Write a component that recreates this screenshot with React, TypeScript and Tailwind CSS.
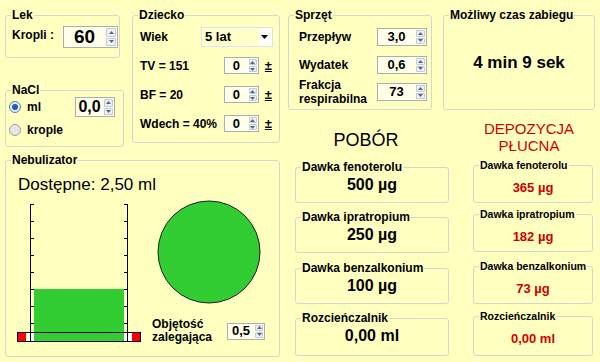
import React from "react";

type GroupProps = {
  label: string;
  className?: string;
  legend?: string;
  children?: React.ReactNode;
};

// WinForms-like group box
const Group = ({ label, className = "", legend = "text-[12px] leading-[14px]", children }: GroupProps) => (
  <fieldset className={"border border-[#d4d6d2] rounded-[3px] min-w-0 shrink-0 " + className}>
    <legend className={"ml-[5px] px-[1px] font-bold whitespace-nowrap " + legend}>{label}</legend>
    {children}
  </fieldset>
);

const Arrow = ({ down }: { down?: boolean }) => (
  <svg width="5" height="3" viewBox="0 0 5 3">
    <path d={down ? "M0 0 L2.5 3 L5 0Z" : "M0 3 L2.5 0 L5 3Z"} fill="#52658a" />
  </svg>
);

type SpinProps = { value: string; box: string; text: string; btn?: string };

const Spin = ({ value, box, text, btn = "w-[11px]" }: SpinProps) => (
  <div className={"flex border border-[#a9adb4] bg-[#ffffea] shrink-0 " + box}>
    <div className={"flex-1 flex items-center justify-center font-bold " + text}>{value}</div>
    <div className={"flex flex-col gap-[1px] p-[1px] " + btn}>
      <div className="flex-1 flex items-center justify-center border border-[#c2cad7] bg-[#edf1f7] rounded-[1px]">
        <Arrow />
      </div>
      <div className="flex-1 flex items-center justify-center border border-[#c2cad7] bg-[#edf1f7] rounded-[1px]">
        <Arrow down />
      </div>
    </div>
  </div>
);

const Radio = ({ checked }: { checked?: boolean }) => (
  <span
    className={
      "w-[12px] h-[12px] rounded-full border flex items-center justify-center shrink-0 " +
      (checked ? "border-[#5b7fa6] bg-[#e3ecf6]" : "border-[#a0a0a0] bg-[#e6e6e6]")
    }
  >
    {checked && <span className="w-[6px] h-[6px] rounded-full bg-[#1d5fae]" />}
  </span>
);

const ChildRow = ({ label, className }: { label: string; className: string }) => (
  <div className={"flex items-center h-[17px] " + className}>
    <span className="flex-1 pl-[7px] text-[12px] font-bold">{label}</span>
    <Spin value="0" box="w-[35px] h-[17px]" text="text-[13px]" btn="w-[10px]" />
    <span className="ml-[6px] mr-[7px] text-[13px] font-bold underline leading-none">±</span>
  </div>
);

const DoseBox = ({ label, value, className }: { label: string; value: string; className: string }) => (
  <Group label={label} className={"w-[154px] " + className}>
    <div className="pt-[1px] text-center text-[16px] leading-[20px] font-bold">{value}</div>
  </Group>
);

const LungBox = ({ label, value, className }: { label: string; value: string; className: string }) => (
  <Group label={label} legend="text-[10.5px] leading-[12px]" className={"w-[120px] " + className}>
    <div className="pt-[8px] text-center text-[13px] leading-[18px] font-bold text-[#d00000]">{value}</div>
  </Group>
);

const ticks = [2.5, 19.5, 36.5, 53.5, 70.5, 87.5, 104.5, 121.5];

export default function App() {
  return (
    <div className="w-[600px] h-[362px] bg-[#ffffc0] flex pl-[5px] pt-[8px] overflow-hidden text-black font-['Liberation_Sans',Arial,sans-serif]">
      {/* left side */}
      <div className="w-[275px] flex flex-col shrink-0">
        <div className="flex h-[139px]">
          <div className="w-[119px] flex flex-col">
            <Group label="Lek" className="w-[115px] h-[50px]">
              <div className="flex items-center pt-[4px]">
                <span className="pl-[6px] mb-[4px] text-[12px] font-bold">Kropli :</span>
                <Spin value="60" box="ml-auto mr-[1px] w-[55px] h-[22px]" text="text-[19px]" btn="w-[12px]" />
              </div>
            </Group>
            <Group label="NaCl" className="w-[119px] h-[64px] mt-[25px]">
              <div className="flex items-center h-[20px]">
                <span className="pl-[3px]">
                  <Radio checked />
                </span>
                <span className="ml-[6px] text-[12px] font-bold">ml</span>
                <Spin value="0,0" box="ml-auto mr-[8px] w-[40px] h-[20px]" text="text-[16px]" />
              </div>
              <div className="flex items-center h-[20px] mt-[3px]">
                <span className="pl-[3px]">
                  <Radio />
                </span>
                <span className="ml-[6px] text-[12px] font-bold">krople</span>
              </div>
            </Group>
          </div>

          <Group label="Dziecko" className="ml-[8px] w-[148px] h-[135px]">
            <div className="flex items-center h-[20px] mt-[5px]">
              <span className="flex-1 pl-[7px] text-[12px] font-bold">Wiek</span>
              <div className="mr-[6px] w-[72px] h-[20px] bg-white border border-[#e2e2e2] flex items-center">
                <span className="ml-[1px] w-[56px] h-[16px] bg-[#ffffc8] text-[13px] font-bold leading-[16px] pl-[2px]">5 lat</span>
                <span className="ml-auto mr-[4px]">
                  <svg width="7" height="4" viewBox="0 0 7 4">
                    <path d="M0 0 L3.5 4 L7 0Z" fill="#000" />
                  </svg>
                </span>
              </div>
            </div>
            <ChildRow label="TV = 151" className="mt-[10px]" />
            <ChildRow label="BF = 20" className="mt-[12px]" />
            <ChildRow label="Wdech = 40%" className="mt-[12px]" />
          </Group>
        </div>

        <Group label="Nebulizator" className="mt-[6px] w-[275px] h-[204px]">
          <div className="mt-[8px] pl-[12px] text-[17px] leading-[20px]">Dostępne: 2,50 ml</div>
          <div className="flex items-start mt-[5px]">
            <svg width="124" height="142" className="ml-[11px] mt-[2px] shrink-0">
              <rect x="0.5" y="130.5" width="123" height="9" fill="#ffffff" />
              <rect x="17" y="87" width="90" height="52" fill="#32cd32" />
              <rect x="0.5" y="130.5" width="123" height="9" fill="none" stroke="#000" />
              <rect x="1" y="131" width="8" height="8" fill="#ff0000" />
              <rect x="115" y="131" width="8" height="8" fill="#ff0000" />
              <path d="M13.5 2 V139.5 H110.5 V2" fill="none" stroke="#000" />
              {ticks.map((y) => (
                <g key={y}>
                  <line x1="13.5" y1={y} x2="17" y2={y} stroke="#000" />
                  <line x1="107" y1={y} x2="110.5" y2={y} stroke="#000" />
                </g>
              ))}
            </svg>
            <div className="flex flex-col ml-[16px]">
              <svg width="104" height="104">
                <circle cx="52" cy="52" r="51" fill="#32cd32" stroke="#1e1e1e" />
              </svg>
              <div className="flex items-center mt-[14px] -ml-[5px]">
                <span className="w-[75px] text-[12px] leading-[13px] font-bold">
                  Objętość
                  <br />
                  zalegająca
                </span>
                <Spin value="0,5" box="w-[38px] h-[17px]" text="text-[13px]" btn="w-[10px]" />
              </div>
            </div>
          </div>
        </Group>
      </div>

      {/* right side */}
      <div className="ml-[8px] w-[307px] flex flex-col shrink-0">
        <div className="flex">
          <Group label="Sprzęt" className="w-[144px] h-[102px]">
            <div className="flex items-center mt-[6px]">
              <span className="flex-1 pl-[10px] text-[12px] font-bold">Przepływ</span>
              <Spin value="3,0" box="mr-[4px] w-[50px] h-[18px]" text="text-[13px]" />
            </div>
            <div className="flex items-center mt-[10px]">
              <span className="flex-1 pl-[10px] text-[12px] font-bold">Wydatek</span>
              <Spin value="0,6" box="mr-[4px] w-[50px] h-[18px]" text="text-[13px]" />
            </div>
            <div className="flex items-center mt-[4px]">
              <span className="flex-1 pl-[10px] text-[12px] leading-[14px] font-bold">
                Frakcja
                <br />
                respirabilna
              </span>
              <Spin value="73" box="mr-[4px] w-[50px] h-[18px]" text="text-[13px]" />
            </div>
          </Group>
          <Group label="Możliwy czas zabiegu" className="ml-[11px] w-[152px] h-[102px]">
            <div className="pt-[31px] text-center text-[17px] leading-[20px] font-bold">4 min 9 sek</div>
          </Group>
        </div>

        <div className="flex">
          <div className="ml-[7px] w-[154px] flex flex-col">
            <div className="mt-[20px] pr-[12px] text-center text-[18px] leading-[20px]">POBÓR</div>
            <DoseBox label="Dawka fenoterolu" value="500 µg" className="mt-[10px] h-[43px]" />
            <DoseBox label="Dawka ipratropium" value="250 µg" className="mt-[7px] h-[43px]" />
            <DoseBox label="Dawka benzalkonium" value="100 µg" className="mt-[8px] h-[43px]" />
            <DoseBox label="Rozcieńczalnik" value="0,00 ml" className="mt-[7px] h-[45px]" />
          </div>
          <div className="ml-[24px] w-[120px] flex flex-col">
            <div className="mt-[10px] pr-[8px] text-center text-[15px] leading-[17px] text-[#d00000]">
              DEPOZYCJA
              <br />
              PŁUCNA
            </div>
            <LungBox label="Dawka fenoterolu" value="365 µg" className="mt-[5px] h-[44px]" />
            <LungBox label="Dawka ipratropium" value="182 µg" className="mt-[5px] h-[44px]" />
            <LungBox label="Dawka benzalkonium" value="73 µg" className="mt-[8px] h-[44px]" />
            <LungBox label="Rozcieńczalnik" value="0,00 ml" className="mt-[6px] h-[46px]" />
          </div>
        </div>
      </div>
    </div>
  );
}
